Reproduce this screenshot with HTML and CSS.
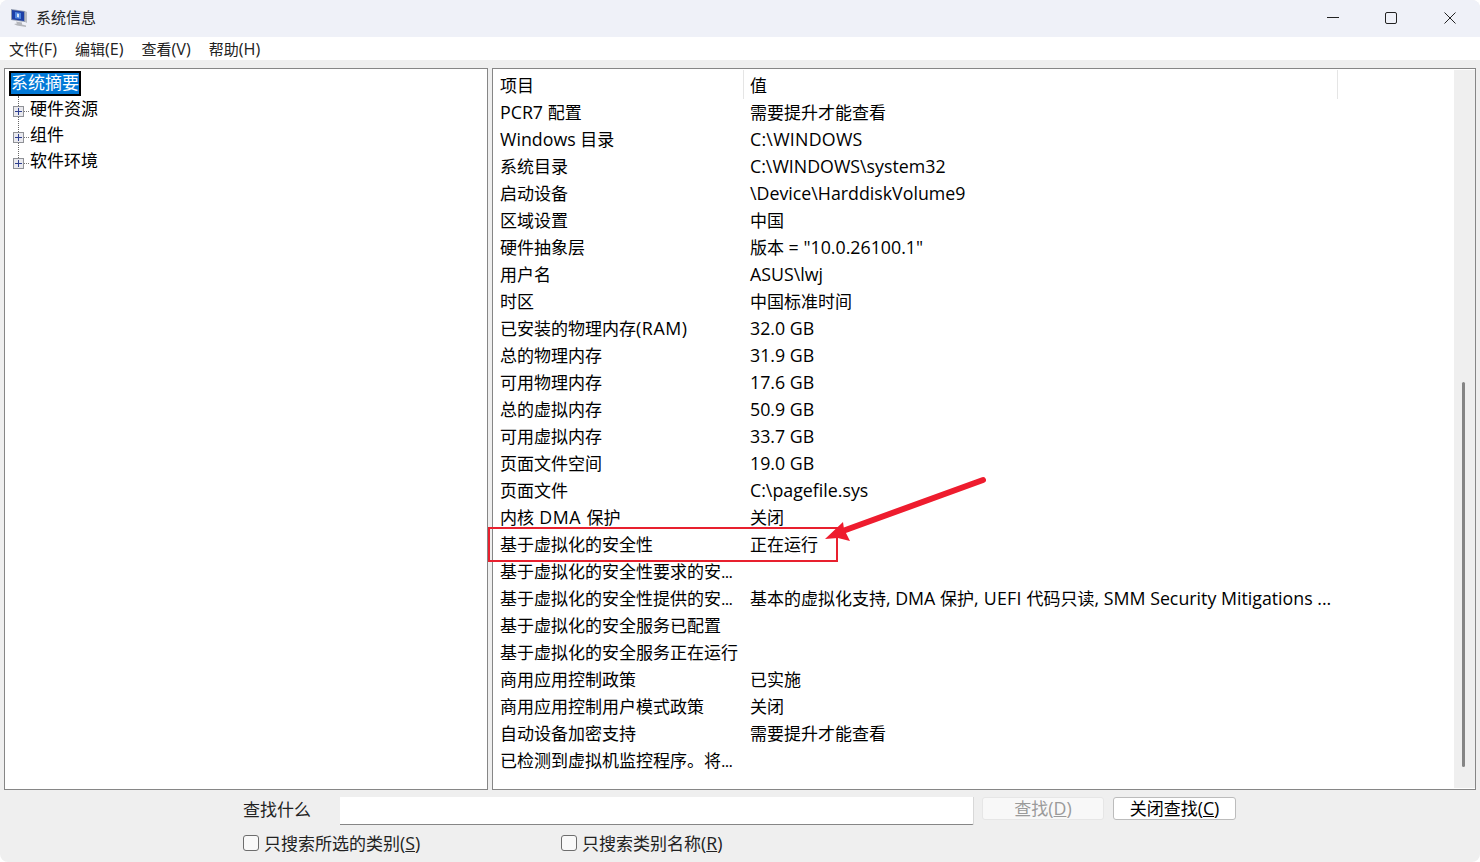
FILE: index.html
```html
<!DOCTYPE html>
<html lang="zh-CN">
<head>
<meta charset="utf-8">
<title>系统信息</title>
<link rel="stylesheet" href="styles.css">
</head>
<body>
<div class="window">
  <header class="titlebar">
    <svg class="app-icon" width="18" height="20" viewBox="0 0 18 20"><path d="M1 1l14 2v11L1 12z" fill="#8f99ad"/><path d="M15 3l2 1v11l-2-1z" fill="#b9bcc4"/><path d="M2 2l12 1.700v9.300L2 11.200z" fill="#1d3fa6"/><path d="M5 4l6 1v6l-6-.8z" fill="#4f86e0"/><path d="M7 5.500l2 .4v3.500l-2-.3z" fill="#d6e5fa"/><path d="M6 13.500l6 1v2l4 1v1.500l-9-1.500-3-1.500 3-.5z" fill="#b4b6bb"/></svg>
    <span class="title">系统信息</span>
    <div class="win-btns">
      <svg width="12" height="12" viewBox="0 0 12 12"><path d="M0 5.500h12" stroke="#222" fill="none"/></svg>
      <svg class="max-icon" width="12" height="12" viewBox="0 0 12 12"><rect x=".5" y=".5" width="11" height="11" rx="1.500" stroke="#222" fill="none"/></svg>
      <svg width="12" height="12" viewBox="0 0 12 12"><path d="M.5.500l11 11M11.500.500l-11 11" stroke="#222" fill="none"/></svg>
    </div>
  </header>
  <nav class="menubar">
    <span>文件<b class="menu-lat">(F)</b></span><span>编辑<b class="menu-lat">(E)</b></span><span>查看<b class="menu-lat">(V)</b></span><span>帮助<b class="menu-lat">(H)</b></span>
  </nav>
  <main class="panes">
    <section class="pane tree">
      <div class="tree-root"><span class="selected">系统摘要</span></div>
      <div class="tree-item"><i class="plus"></i><span>硬件资源</span></div>
      <div class="tree-item"><i class="plus"></i><span>组件</span></div>
      <div class="tree-item"><i class="plus"></i><span>软件环境</span></div>
      <div class="tree-line"></div>
    </section>
    <section class="pane list">
      <div class="table">
        <div class="row head"><span>项目</span><span>值</span></div>
        <div class="row"><span><b class="lat">PCR7 </b>配置</span><span>需要提升才能查看</span></div>
        <div class="row"><span><b class="lat">Windows </b>目录</span><span class="lat wide-s">C:\WINDOWS</span></div>
        <div class="row"><span>系统目录</span><span class="lat">C:\WINDOWS\system32</span></div>
        <div class="row"><span>启动设备</span><span class="lat">\Device\HarddiskVolume9</span></div>
        <div class="row"><span>区域设置</span><span>中国</span></div>
        <div class="row"><span>硬件抽象层</span><span>版本<b class="lat"> = "10.0.26100.1"</b></span></div>
        <div class="row"><span>用户名</span><span class="lat">ASUS\lwj</span></div>
        <div class="row"><span>时区</span><span>中国标准时间</span></div>
        <div class="row"><span>已安装的物理内存<b class="lat wide">(RAM)</b></span><span class="lat">32.0 GB</span></div>
        <div class="row"><span>总的物理内存</span><span class="lat">31.9 GB</span></div>
        <div class="row"><span>可用物理内存</span><span class="lat">17.6 GB</span></div>
        <div class="row"><span>总的虚拟内存</span><span class="lat">50.9 GB</span></div>
        <div class="row"><span>可用虚拟内存</span><span class="lat">33.7 GB</span></div>
        <div class="row"><span>页面文件空间</span><span class="lat">19.0 GB</span></div>
        <div class="row"><span>页面文件</span><span class="lat">C:\pagefile.sys</span></div>
        <div class="row"><span>内核<b class="lat wide"> DMA </b>保护</span><span>关闭</span></div>
        <div class="row"><span>基于虚拟化的安全性</span><span>正在运行</span></div>
        <div class="row"><span>基于虚拟化的安全性要求的安<b class="ell">...</b></span><span></span></div>
        <div class="row"><span>基于虚拟化的安全性提供的安<b class="ell">...</b></span><span>基本的虚拟化支持<b class="lat">, DMA </b>保护<b class="lat wide-s">, UEFI </b>代码只读<b class="lat">, SMM Security Mitigations ...</b></span></div>
        <div class="row"><span>基于虚拟化的安全服务已配置</span><span></span></div>
        <div class="row"><span>基于虚拟化的安全服务正在运行</span><span></span></div>
        <div class="row"><span>商用应用控制政策</span><span>已实施</span></div>
        <div class="row"><span>商用应用控制用户模式政策</span><span>关闭</span></div>
        <div class="row"><span>自动设备加密支持</span><span>需要提升才能查看</span></div>
        <div class="row"><span>已检测到虚拟机监控程序。将<b class="ell">...</b></span><span></span></div>
      </div>
      <div class="scrollbar"><div class="thumb"></div></div>
    </section>
  </main>
  <footer class="findbar">
    <div class="find-row">
      <label class="find-label">查找什么</label>
      <div class="find-input"></div>
      <button class="btn disabled">查找<b class="lat">(<u>D</u>)</b></button>
      <button class="btn btn-close">关闭查找<b class="lat">(<u>C</u>)</b></button>
    </div>
    <div class="check-row">
      <label class="check check-a"><i class="box"></i><span>只搜索所选的类别<b class="lat">(<u>S</u>)</b></span></label>
      <label class="check"><i class="box"></i><span>只搜索类别名称<b class="lat">(<u>R</u>)</b></span></label>
    </div>
  </footer>
  <div class="red-box"></div>
  <svg class="arrow" width="170" height="70" viewBox="0 0 170 70"><path d="M163 5L20 57" stroke="#ee1c2e" stroke-width="6" stroke-linecap="round" fill="none"/><path d="M5 64L23 47 24 54 30 66 18 63z" fill="#ee1c2e"/></svg>
</div>
</body>
</html>
```
FILE: styles.css
```css
* { box-sizing: border-box; }
html, body { margin: 0; height: 100%; }
body {
  font-family: "Open Sans", "Noto Sans CJK SC", sans-serif;
  font-size: 17px;
  color: #000;
  background: #fff;
  overflow: hidden;
}
.window {
  position: relative;
  width: 1480px;
  height: 862px;
  display: flex;
  flex-direction: column;
  background: #efefef;
  border-radius: 8px;
  overflow: hidden;
}
.lat { font-size: 17.8px; font-weight: 400; line-height: 1; }
.wide { letter-spacing: 0.6px; }
.wide-s { letter-spacing: 0.25px; }
.ell { font-weight: 400; letter-spacing: -0.7px; }
.menu-lat { font-size: 16.2px; font-weight: 400; line-height: 1; }
.titlebar {
  height: 37px;
  flex: none;
  background: #eff1f8;
  display: flex;
  align-items: center;
  padding: 0 0 2px 10px;
}
.app-icon { margin-right: 8px; margin-top: 1px; flex: none; }
.title { font-size: 15px; color: #222; margin-top: -3px; }
.win-btns {
  margin-left: auto;
  display: flex;
  gap: 46px;
  padding-right: 24px;
}
.max-icon { margin-right: 1px; }
.menubar {
  height: 23px;
  flex: none;
  background: #fff;
  display: flex;
  align-items: center;
  gap: 18px;
  padding-left: 9px;
  font-size: 15px;
  color: #222;
}
.panes {
  height: 731px;
  flex: none;
  display: flex;
  gap: 4px;
  padding: 8px 4px 1px;
}
.pane {
  background: #fff;
  border: 1px solid #868686;
  position: relative;
}
.tree { width: 484px; padding: 1px 4px; }
.tree-root { height: 26px; display: flex; align-items: flex-end; }
.selected {
  background: #0078d7;
  color: #fff;
  border: 2px solid #000;
  height: 25px;
  line-height: 19px;
}
.tree-item {
  height: 26px;
  display: flex;
  align-items: flex-start;
  gap: 6px;
  padding-left: 4px;
  position: relative;
}
.tree-item > span { line-height: 26px; }
.tree-item::after {
  content: "";
  position: absolute;
  left: 15px;
  top: 15px;
  width: 5px;
  border-top: 1px dotted #777;
}
.plus {
  width: 11px;
  height: 11px;
  margin-top: 10px;
  border: 1px solid #8f9196;
  background:
    linear-gradient(#2e3f8f, #2e3f8f) center / 7px 1px no-repeat,
    linear-gradient(#2e3f8f, #2e3f8f) center / 1px 7px no-repeat,
    #e9e9ee;
  flex: none;
  position: relative;
  z-index: 1;
}
.tree-line {
  position: absolute;
  left: 13px;
  top: 27px;
  height: 72px;
  border-left: 1px dotted #666;
}
.list { flex: 1; display: flex; min-width: 0; }
.table { flex: 1; position: relative; min-width: 0; }
.table::before, .table::after {
  content: "";
  position: absolute;
  top: 1px;
  height: 29px;
  width: 1px;
  background: #e5e5e5;
}
.table::before { left: 250px; }
.table::after { left: 844px; }
.row {
  display: grid;
  grid-template-columns: 250px 1fr;
  height: 27px;
  align-items: center;
  padding-left: 7px;
  white-space: nowrap;
}
.row > span { display: block; line-height: 27px; }
.head { height: 30px; padding-top: 2px; }
.scrollbar { width: 21px; background: #efefef; margin: 1px 0; flex: none; position: relative; }
.thumb {
  position: absolute;
  left: 8px;
  top: 312px;
  width: 3px;
  height: 385px;
  border-radius: 2px;
  background: #858585;
}
.findbar { flex: 1; font-size: 17px; color: #222; }
.find-row {
  display: flex;
  align-items: flex-start;
  padding: 6px 0 0 243px;
  height: 38px;
}
.find-label { width: 97px; line-height: 25px; }
.find-input {
  width: 634px;
  height: 28px;
  background: #fff;
  border-bottom: 1px solid #868686;
  border-right: 1px solid #d8d8d8;
  border-radius: 0 0 2px 0;
  margin-right: 8px;
}
.btn {
  width: 122px;
  height: 23px;
  margin-right: 9px;
  padding: 1px 0 0;
  font: inherit;
  line-height: 20px;
  color: #000;
  background: #fff;
  border: 1px solid #bcbcbc;
  border-radius: 3px;
}
.btn-close { width: 123px; }
.btn.disabled {
  color: #9a9a9a;
  background: #f8f8f8;
  border-color: #e6e6e6;
}
.check-row {
  display: flex;
  padding: 0 0 0 243px;
}
.check { display: flex; align-items: center; height: 26px; }
.check-a { width: 318px; }
.box {
  width: 16px;
  height: 16px;
  margin-top: 2px;
  border: 1px solid #6d6d6d;
  border-radius: 3px;
  background: #f9f9f9;
  margin-right: 5px;
  flex: none;
}
.red-box {
  position: absolute;
  left: 488px;
  top: 527px;
  width: 350px;
  height: 35px;
  border: 2px solid #e8202e;
}
.arrow { position: absolute; left: 820px; top: 475px; }
```
